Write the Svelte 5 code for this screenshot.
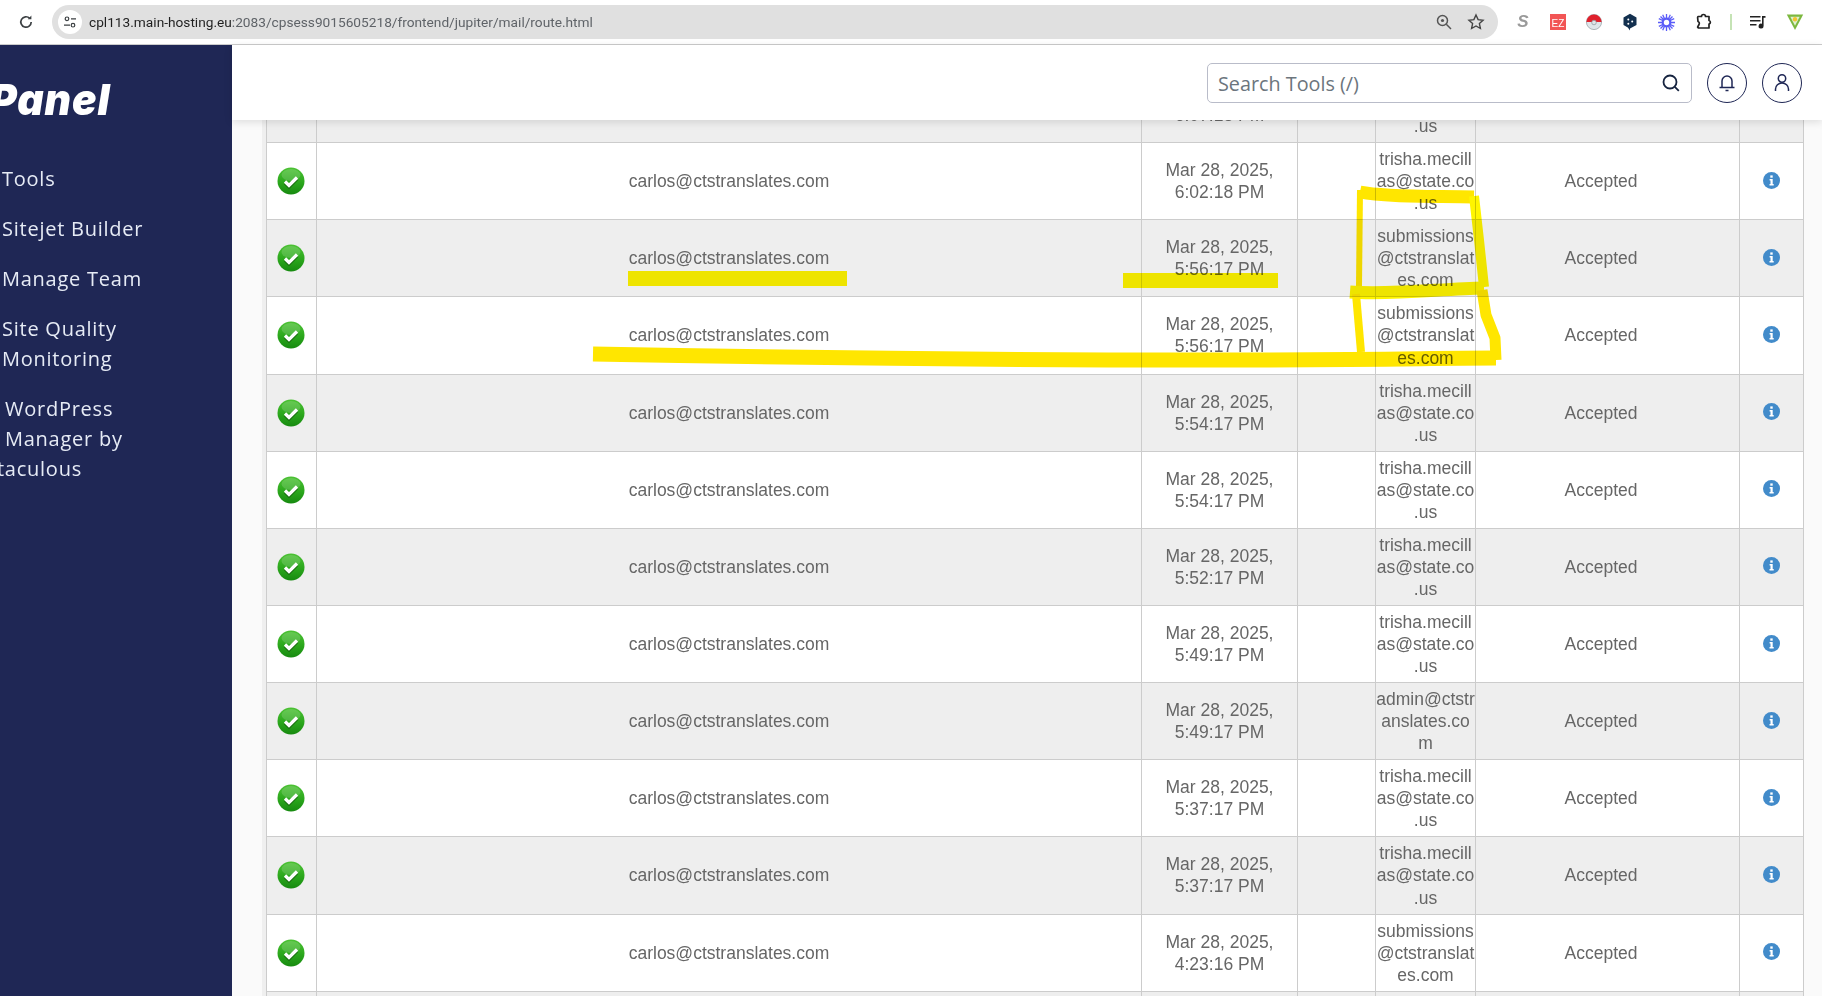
<script>
  const trisha = 'trisha.mecillas@state.co.us';
  const subs = 'submissions@ctstranslates.com';
  const admin = 'admin@ctstranslates.com';

  const rows = [
    ['6:07:18 PM', trisha],
    ['6:02:18 PM', trisha],
    ['5:56:17 PM', subs],
    ['5:56:17 PM', subs],
    ['5:54:17 PM', trisha],
    ['5:54:17 PM', trisha],
    ['5:52:17 PM', trisha],
    ['5:49:17 PM', trisha],
    ['5:49:17 PM', admin],
    ['5:37:17 PM', trisha],
    ['5:37:17 PM', trisha],
    ['4:23:16 PM', subs],
    ['4:21:16 PM', trisha]
  ];

  const nav = ['Tools', 'Sitejet Builder', 'Manage Team'];
</script>

<div class="page">
  <div class="browser">
    <svg class="reload" width="16" height="16" viewBox="0 0 16 16" fill="none" stroke="#3c4043" stroke-width="1.7">
      <path d="M13.2 8a5.2 5.2 0 1 1-1.5-3.7" />
      <path d="M13.4 1.6v3.6H9.8z" fill="#3c4043" stroke="none" />
    </svg>
    <div class="omnibox">
      <span class="site-chip">
        <svg width="14" height="14" viewBox="0 0 14 14" fill="none" stroke="#3c4043" stroke-width="1.2">
          <circle cx="4" cy="3.8" r="1.8" />
          <path d="M8 3.8h5M1 10.2h6" />
          <circle cx="10" cy="10.2" r="1.8" />
        </svg>
      </span>
      <span class="url"><b>cpl113.main-hosting.eu</b>:2083/cpsess9015605218/frontend/jupiter/mail/route.html</span>
      <svg class="omni-icon" width="18" height="18" viewBox="0 0 18 18" fill="none" stroke="#555" stroke-width="1.5">
        <circle cx="7.5" cy="7.5" r="5" />
        <path d="M11.3 11.3l4.7 4.7" />
        <circle cx="7.5" cy="7.5" r="1.6" fill="#555" stroke="none" />
      </svg>
      <svg class="omni-icon star" width="18" height="18" viewBox="0 0 18 18" fill="none" stroke="#444" stroke-width="1.4">
        <path d="M9 2l2.1 4.6 5 .6-3.7 3.400 1 4.900L9 13l-4.400 2.500 1-4.900L1.900 7.200l5-.6z" />
      </svg>
    </div>
    <div class="extensions">
      <span class="ext-s">S</span>
      <span class="ext-ez">EZ</span>
      <svg width="16" height="16" viewBox="0 0 16 16">
        <circle cx="8" cy="8" r="7.6" fill="#dfe6ea" stroke="#8f9a9f" stroke-width=".7" />
        <path d="M.4 8a7.600 7.600 0 0 1 15.200 0z" fill="#e0202c" />
        <circle cx="8" cy="8.500" r="2.300" fill="#dfe5e8" stroke="#8a9499" stroke-width=".7" />
      </svg>
      <svg width="16" height="18" viewBox="0 0 16 18">
        <path d="M8 .8l6.500 3.600v7.500L8 15.600v2l-2.200-3.200-4.300-2.500V4.400z" fill="#13304f" />
        <circle cx="6.300" cy="6.500" r="1" fill="#fff" />
        <circle cx="10.200" cy="8.600" r="1" fill="#fff" />
        <circle cx="6.300" cy="10.800" r="1" fill="#fff" />
      </svg>
      <svg width="17" height="17" viewBox="0 0 17 17" fill="none" stroke="#5a5cf8" stroke-width="2.200">
        <circle cx="8.500" cy="8.500" r="3.800" />
        <path d="M8.500 0v4.500M8.500 12.500V17M0 8.500h4.500M12.500 8.500H17M2.500 2.500l3.200 3.200M11.300 11.300l3.200 3.200M14.500 2.500l-3.200 3.200M5.700 11.300l-3.200 3.200M4.700 .8l1.800 4M10.500 12.200l1.800 4M12.300 .8l-1.800 4M6.500 12.200l-1.800 4M.8 4.700l4 1.800M12.200 10.500l4 1.800M16.200 4.700l-4 1.800M4.800 10.500l-4 1.800" stroke-width="1.300" />
      </svg>
      <svg width="18" height="18" viewBox="0 0 18 18" fill="none" stroke="#222" stroke-width="1.700">
        <path d="M3 3.500h3.500a2 2 0 0 1 4 0H14v4a1.800 1.800 0 0 1 0 3.500v4H3.500l-.9-.8 1.400-2.700a2 2 0 0 0-1-3l-.4-4z" stroke-linejoin="round" />
      </svg>
      <span class="ext-sep"></span>
      <svg width="16" height="16" viewBox="0 0 16 16" fill="#222">
        <path d="M0 2h10.500v1.600H0zM0 6h10.500v1.600H0zM0 10h6.500v1.600H0z" />
        <path d="M12 2h3.500v1.800H13.600V12a2.500 2.500 0 1 1-1.600-2.300z" />
      </svg>
      <svg width="18" height="18" viewBox="0 0 18 18">
        <path d="M.8 1.500h16.400L9 17z" fill="#7cb83f" />
        <path d="M4.300 3.800h9.400L9 12.800z" fill="#dff0cf" />
        <circle cx="9" cy="6.300" r="2.200" fill="#f4c430" />
      </svg>
    </div>
  </div>

  <div class="shell">
    <aside class="sidebar">
      <div class="logo">Panel</div>
      <nav>
        {#each nav as item}
          <div class="nav-item">{item}</div>
        {/each}
        <div class="nav-item">Site Quality<br />Monitoring</div>
        <div class="nav-item wp">
          <span>WordPress</span>
          <span>Manager by</span>
          <span class="clipped">Softaculous</span>
        </div>
      </nav>
    </aside>

    <div class="content">
      <header class="topbar">
        <div class="search">
          <span>Search Tools (/)</span>
          <svg width="20" height="20" viewBox="0 0 20 20" fill="none" stroke="#15233f" stroke-width="1.800">
            <circle cx="9" cy="9" r="6.500" />
            <path d="M13.800 13.800l4 4" />
          </svg>
        </div>
        <button class="round" aria-label="Notifications">
          <svg width="18" height="20" viewBox="0 0 18 20" fill="none" stroke="#1f2755" stroke-width="1.500">
            <path d="M4 14V8a5 5 0 0 1 10 0v6" />
            <path d="M1.500 14.500h15" />
            <path d="M7.500 17.500h3" />
          </svg>
        </button>
        <button class="round" aria-label="Account">
          <svg width="18" height="20" viewBox="0 0 18 20" fill="none" stroke="#1f2755" stroke-width="1.500">
            <circle cx="9" cy="5.500" r="3.700" />
            <path d="M2.500 18v-2a6.500 6 0 0 1 13 0v2" />
          </svg>
        </button>
      </header>

      <main class="main">
        <div class="panel">
          <table>
            <colgroup>
              <col style="width:50px" />
              <col style="width:825px" />
              <col style="width:156px" />
              <col style="width:78px" />
              <col style="width:100px" />
              <col style="width:264px" />
              <col style="width:64px" />
            </colgroup>
            <tbody>
              {#each rows as [time, to], i}
                <tr class:alt={i % 2 === 0}>
                  <td class="state">
                    <svg class="ok" width="28" height="28" viewBox="0 0 28 28">
                      <circle cx="14" cy="14" r="13.500" fill="url(#okFill)" />
                      <ellipse cx="14" cy="8" rx="9.500" ry="6" fill="#fff" opacity=".16" />
                      <path d="M8 14.500l4 4 8-8" fill="none" stroke="#12500c" stroke-width="3.200" opacity=".6" transform="translate(0 1.500)" />
                      <path d="M8 14.500l4 4 8-8" fill="none" stroke="#fff" stroke-width="3.200" />
                    </svg>
                  </td>
                  <td>carlos@ctstranslates.com</td>
                  <td>Mar 28, 2025,<br />{time}</td>
                  <td></td>
                  <td class="addr">{to}</td>
                  <td class="result">Accepted</td>
                  <td>
                    <svg class="info" width="17" height="17" viewBox="0 0 17 17">
                      <circle cx="8.500" cy="8.500" r="8.500" fill="#428bca" />
                      <rect x="7.300" y="3.400" width="2.400" height="2.300" fill="#fff" />
                      <path d="M6.600 7.100h3.100v5h1v1.500H6.500v-1.500h1V8.600h-.9z" fill="#fff" />
                    </svg>
                  </td>
                </tr>
              {/each}
            </tbody>
          </table>
        </div>
      </main>
    </div>
  </div>

  <svg class="marker" width="1822" height="996" viewBox="0 0 1822 996" fill="none" stroke="#ffe600" stroke-linejoin="round">
    <defs>
      <linearGradient id="okFill" x1="0" y1="0" x2="0" y2="1">
        <stop offset="0" stop-color="#4cc234" />
        <stop offset=".55" stop-color="#2ba71c" />
        <stop offset="1" stop-color="#178a10" />
      </linearGradient>
    </defs>
    <path d="M628 278.500H847M1123 280.500H1278" stroke="#fff500" stroke-width="15" />
    <path d="M1360 192C1385 197 1430 196 1474 197" stroke-width="13" />
    <path d="M1360 190L1359 286" stroke-width="6" />
    <path d="M1474 196L1479 240L1484 287" stroke="#fff500" stroke-width="10" />
    <path d="M1350 292C1390 295 1440 289 1484 288" stroke="#fff500" stroke-width="13" />
    <path d="M1356 294L1361 352" stroke-width="8" />
    <path d="M1482 290L1486 315L1495 338L1496 360" stroke-width="11" />
    <path d="M593 354C800 358 1000 360 1200 360S1420 358 1496 358" stroke-width="15" />
  </svg>
</div>

<style>
  :global(body) {
    margin: 0;
    background: #fff;
  }

  .page {
    position: relative;
    width: 1822px;
    height: 996px;
    overflow: hidden;
    display: flex;
    flex-direction: column;
    font-family: 'Liberation Sans', Arial, sans-serif;
  }

  .browser {
    height: 45px;
    flex: none;
    display: flex;
    align-items: center;
    box-sizing: border-box;
    padding-left: 18px;
    background: #fff;
    border-bottom: 1px solid #ccc;
  }

  .reload {
    flex: none;
    margin-right: 18px;
  }

  .omnibox {
    width: 1446px;
    height: 34px;
    flex: none;
    display: flex;
    align-items: center;
    box-sizing: border-box;
    padding: 0 13px 0 6px;
    background: #e0e0e0;
    border-radius: 17px;
  }

  .site-chip {
    width: 24px;
    height: 24px;
    flex: none;
    display: flex;
    align-items: center;
    justify-content: center;
    background: #fff;
    border-radius: 50%;
  }

  .url {
    flex: 1;
    margin-left: 7px;
    font-family: Roboto, sans-serif;
    font-size: 13.7px;
    color: #5f6368;
  }

  .url b {
    font-weight: 400;
    color: #1f1f1f;
  }

  .omni-icon.star {
    margin-left: 14px;
  }

  .extensions {
    flex: none;
    display: flex;
    align-items: center;
    margin-left: 18px;
    height: 20px;
  }

  .extensions > * {
    margin-right: 20px;
    flex: none;
  }

  .ext-s {
    width: 14px;
    font-size: 17px;
    font-weight: 700;
    font-style: italic;
    color: #9a9a9a;
    text-align: center;
  }

  .ext-ez {
    width: 16px;
    height: 16px;
    box-sizing: border-box;
    padding-top: 4px;
    background: #f25555;
    color: #fff;
    font-size: 10px;
    line-height: 12px;
    text-align: center;
  }

  .ext-sep {
    width: 2px;
    height: 16px;
    background: #c5e3b5;
    margin-right: 18px !important;
    margin-left: -3px;
  }

  .shell {
    flex: 1;
    display: flex;
    min-height: 0;
  }

  .sidebar {
    width: 232px;
    flex: none;
    background: #1f2755;
    color: #e6ebf5;
    font-family: 'Open Sans', sans-serif;
    overflow: hidden;
  }

  .logo {
    height: 119px;
    margin-left: -10px;
    padding-top: 29px;
    box-sizing: border-box;
    font-family: Inter, sans-serif;
    font-size: 43px;
    font-weight: 900;
    font-style: italic;
    line-height: 50px;
    letter-spacing: 1px;
    color: #fff;
    transform: scaleX(.95);
    transform-origin: left top;
  }

  .nav-item {
    padding: 0 0 20px 2px;
    font-size: 20px;
    line-height: 30px;
    letter-spacing: .75px;
  }

  .wp span {
    display: block;
    padding-left: 3px;
  }

  .wp .clipped {
    margin-left: -40px;
  }

  .content {
    flex: 1;
    display: flex;
    flex-direction: column;
    min-width: 0;
  }

  .topbar {
    position: relative;
    z-index: 2;
    height: 75px;
    flex: none;
    display: flex;
    align-items: center;
    justify-content: flex-end;
    gap: 15px;
    padding-right: 20px;
    box-sizing: border-box;
    background: #fff;
    box-shadow: 0 2px 8px rgba(0, 0, 0, .12);
  }

  .search {
    width: 485px;
    height: 40px;
    display: flex;
    align-items: center;
    justify-content: space-between;
    box-sizing: border-box;
    padding: 0 10px;
    margin-top: 1px;
    background: #fff;
    border: 1px solid #b9bcc9;
    border-radius: 5px;
    font-family: 'Open Sans', sans-serif;
    font-size: 19.8px;
    color: #6c757d;
  }

  .round {
    width: 40px;
    height: 40px;
    margin-top: 1px;
    padding: 0;
    display: flex;
    align-items: center;
    justify-content: center;
    background: #fff;
    border: 1px solid #1f2755;
    border-radius: 50%;
  }

  .main {
    flex: 1;
    min-height: 0;
    overflow: hidden;
    padding-left: 30px;
    background: #fafafa;
  }

  .panel {
    width: 1541px;
    box-sizing: border-box;
    padding: 0 3px 0 4px;
    background: linear-gradient(to right, #efefef 4px, transparent 4px), linear-gradient(to left, #efefef 4px, transparent 4px);
  }

  table {
    width: 1537px;
    margin-top: -55px;
    table-layout: fixed;
    border-collapse: collapse;
    background: #fff;
    color: #666;
    font-size: 17.5px;
    line-height: 22.05px;
    text-align: center;
  }

  td {
    padding: 5px 0;
    border: 1px solid #ccc;
    vertical-align: middle;
  }

  .alt td {
    background: #eee;
  }

  .state {
    padding-right: 2px;
  }

  .addr {
    overflow-wrap: anywhere;
  }

  .result {
    padding-right: 13px;
  }

  svg.ok,
  svg.info {
    display: block;
    margin: 0 auto;
  }

  svg.info {
    position: relative;
    top: -1px;
  }

  .marker {
    position: absolute;
    top: 0;
    left: 0;
    pointer-events: none;
    mix-blend-mode: multiply;
  }
</style>
